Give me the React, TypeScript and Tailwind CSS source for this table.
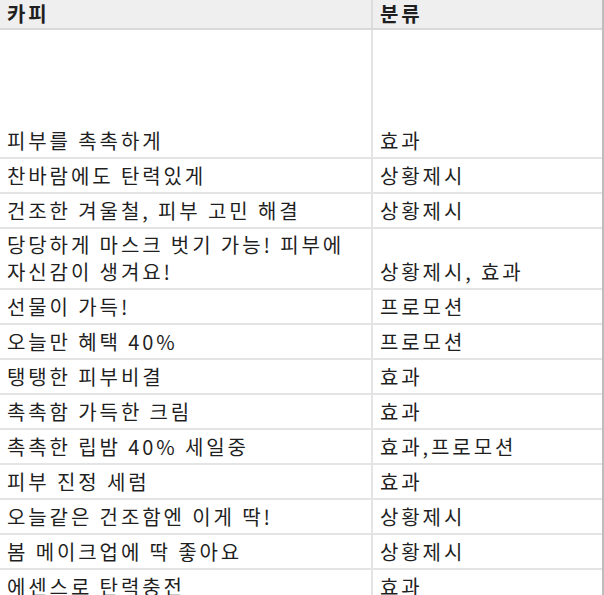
const rows: { copy: string[]; tag: string; h: string }[] = [
  { copy: ['피부를 촉촉하게'], tag: '효과', h: 'h-[129px]' },
  { copy: ['찬바람에도 탄력있게'], tag: '상황제시', h: 'h-[35px]' },
  { copy: ['건조한 겨울철, 피부 고민 해결'], tag: '상황제시', h: 'h-[35px]' },
  { copy: ['당당하게 마스크 벗기 가능! 피부에', '자신감이 생겨요!'], tag: '상황제시, 효과', h: 'h-[61px]' },
  { copy: ['선물이 가득!'], tag: '프로모션', h: 'h-[35px]' },
  { copy: ['오늘만 혜택 40%'], tag: '프로모션', h: 'h-[35px]' },
  { copy: ['탱탱한 피부비결'], tag: '효과', h: 'h-[35px]' },
  { copy: ['촉촉함 가득한 크림'], tag: '효과', h: 'h-[35px]' },
  { copy: ['촉촉한 립밤 40% 세일중'], tag: '효과,프로모션', h: 'h-[35px]' },
  { copy: ['피부 진정 세럼'], tag: '효과', h: 'h-[35px]' },
  { copy: ['오늘같은 건조함엔 이게 딱!'], tag: '상황제시', h: 'h-[35px]' },
  { copy: ['봄 메이크업에 딱 좋아요'], tag: '상황제시', h: 'h-[35px]' },
  { copy: ['에센스로 탄력충전'], tag: '효과', h: 'h-[35px]' },
];

export default function App() {
  return (
    <div className="w-[604px] h-[595px] overflow-hidden bg-white text-[#1f1f1f] font-['Noto_Sans_CJK_KR','Noto_Sans',sans-serif] text-[20px] leading-[27px] tracking-[2.9px]">
      <div className="w-[604px] border-r-2 border-[#bdbdbd]">
        {/* header */}
        <div className="flex h-[30px] bg-[#efefef] border-b-2 border-[#d9d9d9] font-bold">
          <div className="w-[373px] border-r-2 border-[#dcdcdc] pl-[7px] leading-[28px]">카피</div>
          <div className="flex-1 pl-[7px] leading-[28px]">분류</div>
        </div>

        {rows.map((r, i) => (
          <div key={i} className={`flex ${r.h} border-b-2 border-[#e4e4e4]`}>
            <div className="w-[373px] border-r-2 border-[#e4e4e4] pl-[7px] pb-[3px] flex flex-col justify-end">
              {r.copy.map((line) => (
                <div key={line} className="whitespace-nowrap">{line}</div>
              ))}
            </div>
            <div className="flex-1 pl-[7px] pb-[3px] flex flex-col justify-end whitespace-nowrap">
              {r.tag}
            </div>
          </div>
        ))}
      </div>
    </div>
  );
}
